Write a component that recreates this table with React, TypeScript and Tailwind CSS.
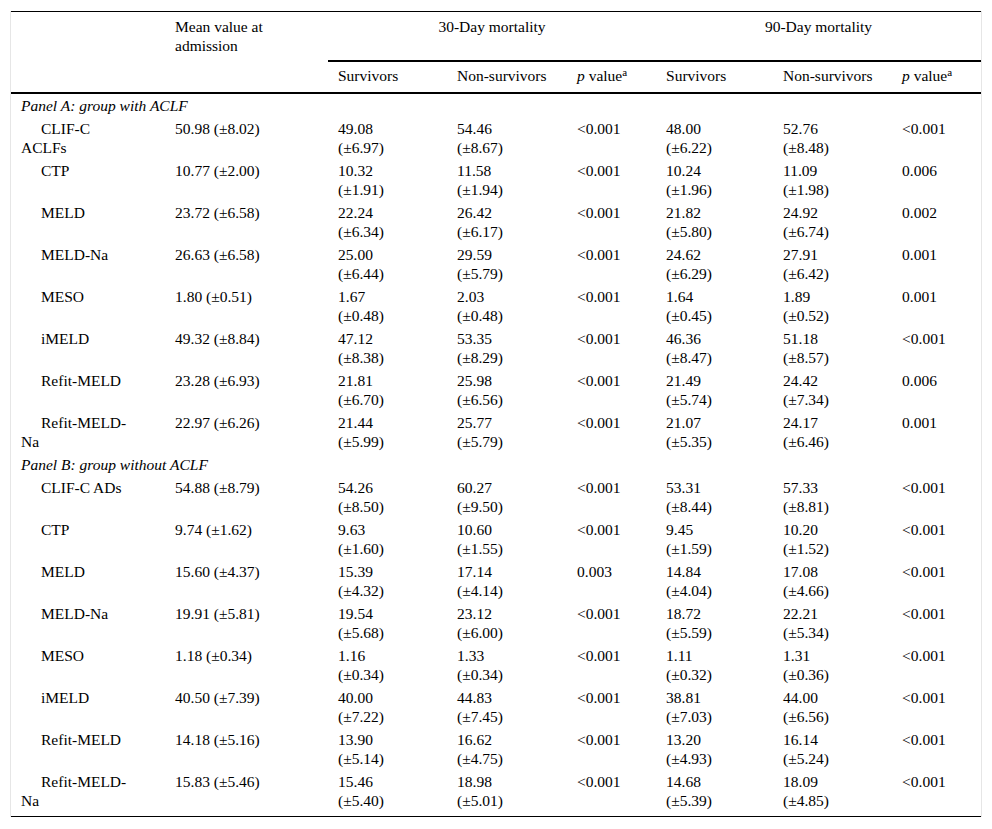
// Scores table: mean value at admission and 30/90-day mortality split
type Row = { label: string[]; mean: string; d30: [string, string, string]; d90: [string, string, string] };

const PANEL_A: Row[] = [
  { label: ['CLIF-C', 'ACLFs'], mean: '50.98 (±8.02)', d30: ['49.08 (±6.97)', '54.46 (±8.67)', '<0.001'], d90: ['48.00 (±6.22)', '52.76 (±8.48)', '<0.001'] },
  { label: ['CTP'], mean: '10.77 (±2.00)', d30: ['10.32 (±1.91)', '11.58 (±1.94)', '<0.001'], d90: ['10.24 (±1.96)', '11.09 (±1.98)', '0.006'] },
  { label: ['MELD'], mean: '23.72 (±6.58)', d30: ['22.24 (±6.34)', '26.42 (±6.17)', '<0.001'], d90: ['21.82 (±5.80)', '24.92 (±6.74)', '0.002'] },
  { label: ['MELD-Na'], mean: '26.63 (±6.58)', d30: ['25.00 (±6.44)', '29.59 (±5.79)', '<0.001'], d90: ['24.62 (±6.29)', '27.91 (±6.42)', '0.001'] },
  { label: ['MESO'], mean: '1.80 (±0.51)', d30: ['1.67 (±0.48)', '2.03 (±0.48)', '<0.001'], d90: ['1.64 (±0.45)', '1.89 (±0.52)', '0.001'] },
  { label: ['iMELD'], mean: '49.32 (±8.84)', d30: ['47.12 (±8.38)', '53.35 (±8.29)', '<0.001'], d90: ['46.36 (±8.47)', '51.18 (±8.57)', '<0.001'] },
  { label: ['Refit-MELD'], mean: '23.28 (±6.93)', d30: ['21.81 (±6.70)', '25.98 (±6.56)', '<0.001'], d90: ['21.49 (±5.74)', '24.42 (±7.34)', '0.006'] },
  { label: ['Refit-MELD-', 'Na'], mean: '22.97 (±6.26)', d30: ['21.44 (±5.99)', '25.77 (±5.79)', '<0.001'], d90: ['21.07 (±5.35)', '24.17 (±6.46)', '0.001'] },
];

const PANEL_B: Row[] = [
  { label: ['CLIF-C ADs'], mean: '54.88 (±8.79)', d30: ['54.26 (±8.50)', '60.27 (±9.50)', '<0.001'], d90: ['53.31 (±8.44)', '57.33 (±8.81)', '<0.001'] },
  { label: ['CTP'], mean: '9.74 (±1.62)', d30: ['9.63 (±1.60)', '10.60 (±1.55)', '<0.001'], d90: ['9.45 (±1.59)', '10.20 (±1.52)', '<0.001'] },
  { label: ['MELD'], mean: '15.60 (±4.37)', d30: ['15.39 (±4.32)', '17.14 (±4.14)', '0.003'], d90: ['14.84 (±4.04)', '17.08 (±4.66)', '<0.001'] },
  { label: ['MELD-Na'], mean: '19.91 (±5.81)', d30: ['19.54 (±5.68)', '23.12 (±6.00)', '<0.001'], d90: ['18.72 (±5.59)', '22.21 (±5.34)', '<0.001'] },
  { label: ['MESO'], mean: '1.18 (±0.34)', d30: ['1.16 (±0.34)', '1.33 (±0.34)', '<0.001'], d90: ['1.11 (±0.32)', '1.31 (±0.36)', '<0.001'] },
  { label: ['iMELD'], mean: '40.50 (±7.39)', d30: ['40.00 (±7.22)', '44.83 (±7.45)', '<0.001'], d90: ['38.81 (±7.03)', '44.00 (±6.56)', '<0.001'] },
  { label: ['Refit-MELD'], mean: '14.18 (±5.16)', d30: ['13.90 (±5.14)', '16.62 (±4.75)', '<0.001'], d90: ['13.20 (±4.93)', '16.14 (±5.24)', '<0.001'] },
  { label: ['Refit-MELD-', 'Na'], mean: '15.83 (±5.46)', d30: ['15.46 (±5.40)', '18.98 (±5.01)', '<0.001'], d90: ['14.68 (±5.39)', '18.09 (±4.85)', '<0.001'] },
];

const td = 'px-[10px] pt-[2px] pb-[2px] align-top text-left font-normal';

// "49.08 (±6.97)" -> two lines, the way the narrow columns wrap it
function Split({ v }: { v: string }) {
  const i = v.indexOf(' (');
  if (i < 0) return <>{v}</>;
  return (
    <>
      {v.slice(0, i)}
      <br />
      {v.slice(i + 1)}
    </>
  );
}

function PValue() {
  return (
    <>
      <i>p</i> value<sup className="text-[11px]">a</sup>
    </>
  );
}

function DataRow({ row, last }: { row: Row; last?: boolean }) {
  const cls = last ? `${td} pb-[6px]` : td;
  return (
    <tr>
      <td className={`${cls} indent-[20px]`}>
        {row.label[0]}
        {row.label[1] && (
          <>
            <br />
            {row.label[1]}
          </>
        )}
      </td>
      <td className={cls}>{row.mean}</td>
      <td className={cls}><Split v={row.d30[0]} /></td>
      <td className={cls}><Split v={row.d30[1]} /></td>
      <td className={cls}>{row.d30[2]}</td>
      <td className={cls}><Split v={row.d90[0]} /></td>
      <td className={cls}><Split v={row.d90[1]} /></td>
      <td className={cls}>{row.d90[2]}</td>
    </tr>
  );
}

function PanelHead({ children }: { children: React.ReactNode }) {
  return (
    <tr>
      <td colSpan={8} className={`${td} italic`}>{children}</td>
    </tr>
  );
}

export default function App() {
  return (
    <div className="min-h-[829px] bg-white pt-[11px] pl-[10px]">
      <div className="w-[972px] border-x border-[#e6e6e6]">
        <table className="w-[970px] table-fixed border-separate border-spacing-0 border-y border-black font-['Liberation_Serif','Times_New_Roman',serif] text-[15.5px] leading-[19px] text-black">
          <colgroup>
            <col className="w-[154px]" />
            <col className="w-[163px]" />
            <col className="w-[119px]" />
            <col className="w-[120px]" />
            <col className="w-[89px]" />
            <col className="w-[117px]" />
            <col className="w-[119px]" />
            <col className="w-[89px]" />
          </colgroup>
          <thead>
            <tr className="h-[50px]">
              <th rowSpan={2} className="border-b-2 border-black" />
              <th rowSpan={2} className="border-b-2 border-black px-[10px] pt-[5px] align-top text-left font-normal">
                Mean value at
                <br />
                admission
              </th>
              <th colSpan={3} className="border-b-2 border-black px-[10px] pt-[5px] align-top text-center font-normal">
                30-Day mortality
              </th>
              <th colSpan={3} className="border-b-2 border-black px-[10px] pt-[5px] align-top text-center font-normal">
                90-Day mortality
              </th>
            </tr>
            <tr className="h-[32px]">
              <th className="border-b-2 border-black px-[10px] pt-[4px] align-top text-left font-normal">Survivors</th>
              <th className="border-b-2 border-black px-[10px] pt-[4px] align-top text-left font-normal">Non-survivors</th>
              <th className="border-b-2 border-black px-[10px] pt-[4px] align-top text-left font-normal"><PValue /></th>
              <th className="border-b-2 border-black px-[10px] pt-[4px] align-top text-left font-normal">Survivors</th>
              <th className="border-b-2 border-black px-[10px] pt-[4px] align-top text-left font-normal">Non-survivors</th>
              <th className="border-b-2 border-black px-[10px] pt-[4px] align-top text-left font-normal"><PValue /></th>
            </tr>
          </thead>
          <tbody>
            <PanelHead>Panel A: group with ACLF</PanelHead>
            {PANEL_A.map((r) => (
              <DataRow key={'a' + r.label.join('')} row={r} />
            ))}
            <PanelHead>Panel B: group without ACLF</PanelHead>
            {PANEL_B.map((r, i) => (
              <DataRow key={'b' + r.label.join('')} row={r} last={i === PANEL_B.length - 1} />
            ))}
          </tbody>
        </table>
      </div>
    </div>
  );
}
